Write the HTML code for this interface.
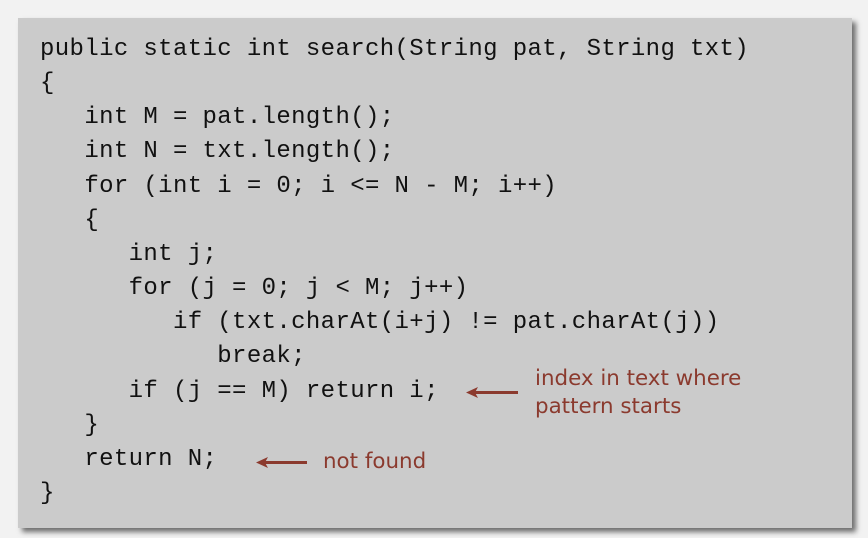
<!DOCTYPE html>
<html><head><style>
html,body{margin:0;padding:0;width:868px;height:538px;background:#f2f2f2;overflow:hidden}
.box{position:absolute;left:18px;top:18px;width:834px;height:510px;background:#cbcbcb;box-shadow:4px 4px 5px rgba(0,0,0,0.55)}
pre{position:absolute;left:40px;top:33px;margin:0;font-family:"Liberation Mono",monospace;font-size:24px;letter-spacing:0.37px;line-height:34.15px;color:#111}
.a{position:absolute;font-family:"DejaVu Sans","Liberation Sans",sans-serif;font-size:21.4px;color:#8b3a2e;line-height:28px}
svg{position:absolute;left:0;top:0}
</style></head><body>
<div class="box"></div>
<pre>public static int search(String pat, String txt)
{
   int M = pat.length();
   int N = txt.length();
   for (int i = 0; i &lt;= N - M; i++)
   {
      int j;
      for (j = 0; j &lt; M; j++)
         if (txt.charAt(i+j) != pat.charAt(j))
            break;
      if (j == M) return i;
   }
   return N;
}</pre>
<div class="a" style="left:535px;top:365px">index in text where<br>pattern starts</div>
<div class="a" style="left:323px;top:448px">not found</div>
<svg width="868" height="538">
<g stroke="#8b3a2e" stroke-width="3" fill="#8b3a2e">
<line x1="472" y1="392.5" x2="518" y2="392.5"/>
<line x1="262" y1="462.5" x2="307" y2="462.5"/>
</g>
<g fill="#8b3a2e">
<path d="M466 392.5 L478 387 L475 392.5 L478 398 Z"/>
<path d="M256 462.5 L268 457 L265 462.5 L268 468 Z"/>
</g>
</svg>
</body></html>
